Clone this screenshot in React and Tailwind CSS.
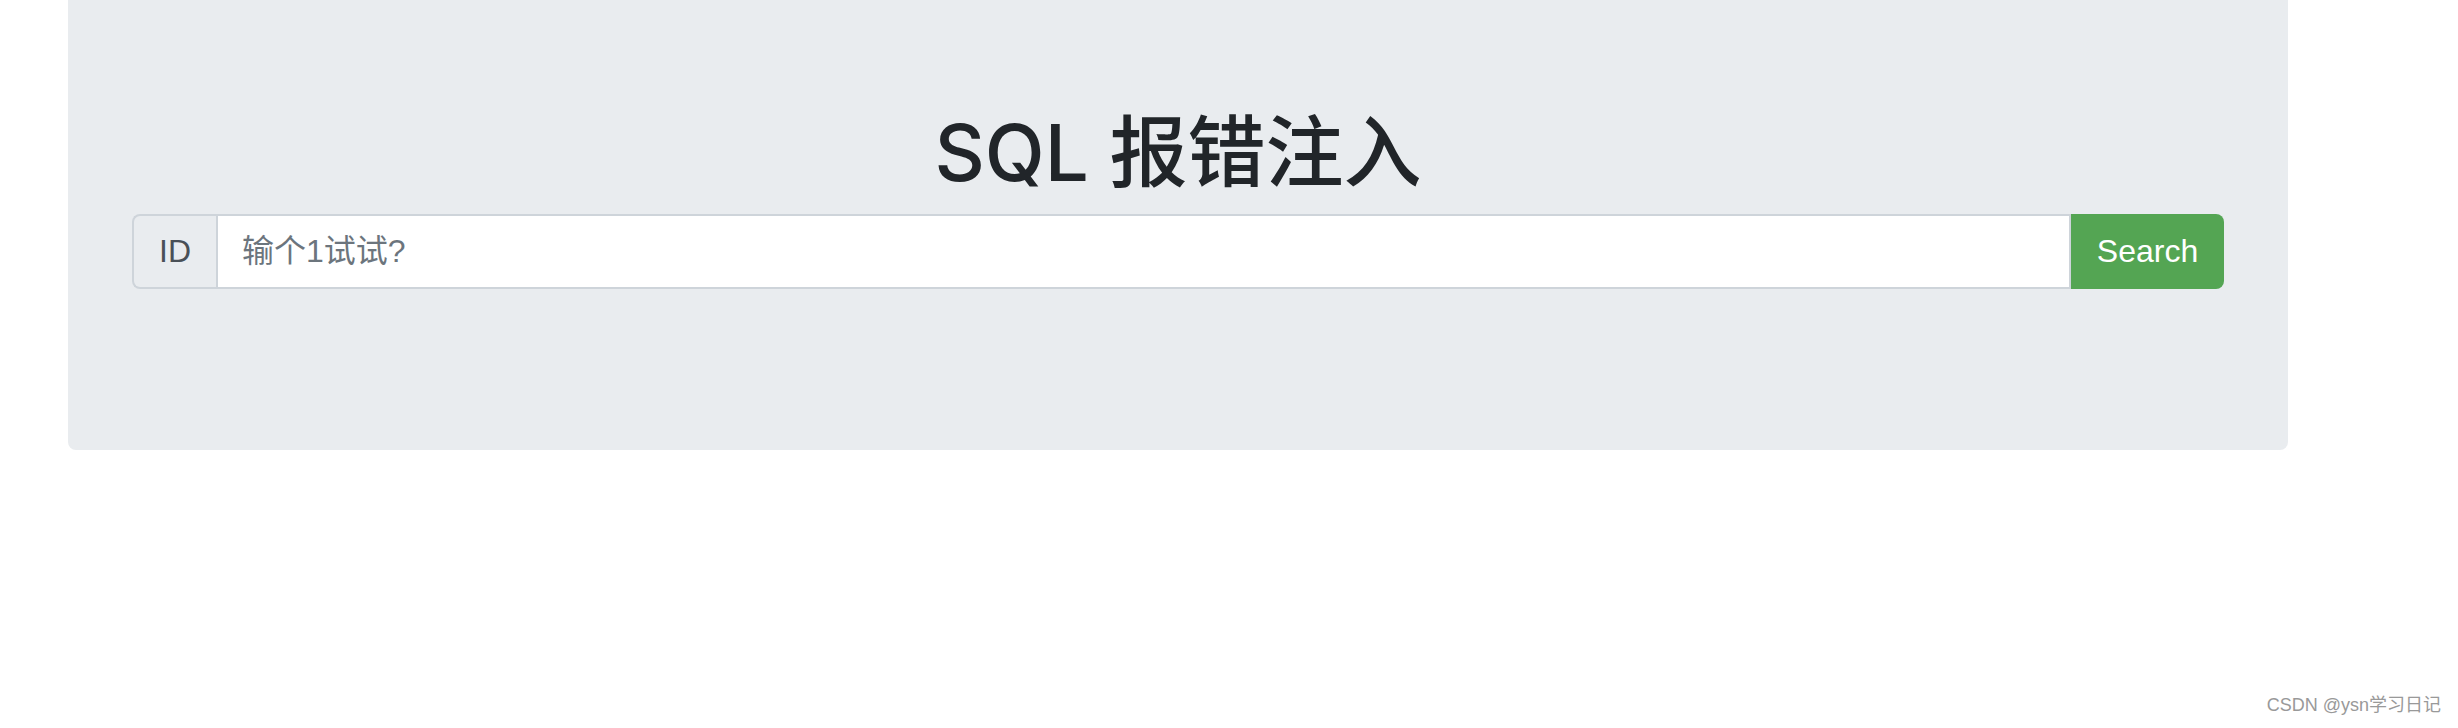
export default function App() {
  return (
    <div
      className="relative h-[728px] w-full bg-white"
      style={{ fontFamily: '"Liberation Sans", "Noto Sans CJK SC", sans-serif' }}
    >
      <div className="ml-[68px] w-[2220px] rounded-b-[8px] bg-[#e9ecef] px-[64px] pt-[106px] pb-[161px]">
        <h1
          className="mb-[14px] text-center text-[78px] font-medium leading-[1.2] text-[#212529]"
          style={{ fontFamily: 'Inter, "Noto Sans CJK SC", sans-serif' }}
        >
          SQL 报错注入
        </h1>
        <form className="flex h-[75px] w-full" onSubmit={(e) => e.preventDefault()}>
          <span className="flex items-center rounded-l-[8px] border-2 border-r-0 border-[#ced4da] bg-[#e9ecef] px-[25px] text-[32px] text-[#495057]">
            ID
          </span>
          <input
            type="text"
            placeholder="输个1试试?"
            className="min-w-0 flex-1 border-2 border-[#ced4da] bg-white px-[24px] text-[32px] text-[#495057] outline-none placeholder:text-[#6c757d]"
          />
          <button
            type="submit"
            className="w-[153px] rounded-r-[8px] bg-[#54a553] text-[32px] text-white"
          >
            Search
          </button>
        </form>
      </div>
      <div className="absolute right-[17px] bottom-[9px] text-[18px] text-[#999999]">
        CSDN @ysn学习日记
      </div>
    </div>
  )
}
